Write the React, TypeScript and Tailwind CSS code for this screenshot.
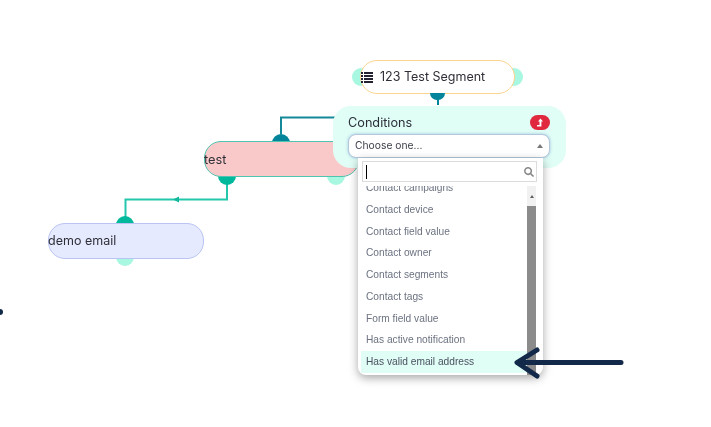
import { FaSearch } from 'react-icons/fa';

const OPTIONS = [
  'Contact device',
  'Contact field value',
  'Contact owner',
  'Contact segments',
  'Contact tags',
  'Form field value',
  'Has active notification',
];

function Dot({ className }: { className: string }) {
  return <div className={`absolute -z-10 h-[18px] w-[18px] rounded-full ${className}`} />;
}

function ConditionsPanel() {
  return (
    <div className="absolute left-[333px] top-[106px] h-[62px] w-[233px] rounded-[18px] bg-[#e0fdf6] px-[15px] pt-[9px]">
      <div className="flex h-[15px] items-center justify-between pr-px">
        <span className="text-[12.700px] text-[#2b2f3a]">Conditions</span>
        <span className="flex h-[15px] w-[20px] items-center justify-center rounded-full bg-[#e0283f]">
          <svg width="8" height="9" viewBox="0 0 8 9" fill="white">
            <path d="M4.500 0.500 7 3.500H5.400V8.500H1V7H3.500V3.500H2Z" />
          </svg>
        </span>
      </div>

      {/* select + open dropdown */}
      <div className="relative mt-[4px] w-[202px]">
        <div className="flex h-[24px] items-center justify-between rounded-[8px] border border-[#b4c8dc] bg-white px-[6px] text-[10.300px] text-[#3c3f4a] shadow-[0_0_3px_rgba(70,120,190,0.45)]">
          <span>Choose one...</span>
          <span className="h-0 w-0 border-x-[3px] border-b-[4px] border-x-transparent border-b-[#777]" />
        </div>

        <div className="absolute left-[10px] top-[24px] h-[217px] w-[185px] overflow-hidden rounded-b-[8px] bg-white font-['Liberation_Sans',sans-serif] shadow-[0_3px_10px_rgba(0,0,0,0.35)]">
          <div className="ml-[4px] mr-[6px] mt-[3px] flex h-[21px] items-center justify-between border border-[#dcdcdc] pl-[3px] pr-[2px]">
            <span className="h-[14px] w-px bg-black" />
            <FaSearch className="text-[10px] text-[#8a8a8a]" />
          </div>
          <div className="mt-[4px] flex h-[189px] pl-[3px] pr-[7px]">
            <div className="min-w-0 flex-1 overflow-hidden text-[10.200px] leading-[21.750px] text-[#6b7280]">
              <div className="-mt-[9px] pl-[5px]">Contact campaigns</div>
              {OPTIONS.map((option) => (
                <div key={option} className="pl-[5px]">
                  {option}
                </div>
              ))}
              <div className="bg-[#e0fdf6] pl-[5px] text-[#4a5160]">Has valid email address</div>
            </div>
            <div className="flex w-[9px] flex-col bg-[#f1f1f1]">
              <div className="flex h-[20px] items-center justify-center">
                <span className="h-0 w-0 border-x-[2.500px] border-b-[3px] border-x-transparent border-b-[#606060]" />
              </div>
              <div className="flex-1 bg-[#8b8b8b]" />
            </div>
          </div>
        </div>
      </div>
    </div>
  );
}

export default function App() {
  return (
    <div className="relative isolate h-[427px] w-[711px] overflow-hidden bg-white font-['Inter',sans-serif] text-[#2f2f38] blur-[0.35px]">
      {/* connectors */}
      <svg className="absolute inset-0 -z-10" width="711" height="427" fill="none">
        <path d="M281 134V117.500H340" stroke="#15899a" strokeWidth="2" />
        <path d="M227 180V199.500H125.500V218" stroke="#22c7ac" strokeWidth="2" />
        <path d="M173 199.500L179 196.500V202.500Z" fill="#12b89c" />
      </svg>

      {/* segment node */}
      <div className="absolute left-[360px] top-[60px] flex h-[34px] w-[155px] items-center gap-[7px] rounded-[17px] border-[1.500px] border-[#fbd48f] bg-white text-[12.500px]">
        <Dot className="-left-[9px] top-[7px] bg-[#a8f7e0]" />
        <Dot className="-right-[9px] top-[7px] bg-[#a8f7e0]" />
        <svg width="12" height="11" viewBox="0 0 12 11" fill="#222230" className="shrink-0">
          <path d="M0 0h2v2H0zM3 0h9v2H3zM0 3h2v2H0zM3 3h9v2H3zM0 6h2v2H0zM3 6h9v2H3zM0 9h2v2H0zM3 9h9v2H3z" />
        </svg>
        <span>123 Test Segment</span>
        <div className="absolute left-[69px] top-[32px] h-[7px] w-[15px] rounded-b-full bg-[#02859a]" />
        <div className="absolute left-[76px] top-[38px] h-[6px] w-[1.500px] bg-[#02859a]" />
      </div>

      {/* test node */}
      <div className="absolute left-[204px] top-[141px] flex h-[36px] w-[155px] items-center rounded-[17px] border-[1.500px] border-[#4fc4b0] bg-[#f9c9c9] pt-px text-[12.800px]">
        <Dot className="left-[67px] -top-[8px] bg-[#02859a]" />
        <Dot className="left-[13px] top-[25px] bg-[#00b89c]" />
        <Dot className="left-[122px] top-[25px] bg-[#a8f7e0]" />
        <span className="-ml-px">test</span>
      </div>

      {/* demo email node */}
      <div className="absolute left-[48px] top-[223px] flex h-[36px] w-[156px] items-center rounded-[17px] border-[1.500px] border-[#bac4f3] bg-[#e6eafe] text-[12.500px]">
        <Dot className="left-[67px] -top-[8px] bg-[#00b89c]" />
        <Dot className="left-[67px] top-[24px] bg-[#a8f7e0]" />
        <span className="-ml-px">demo email</span>
      </div>

      <div className="absolute -left-[3px] top-[309px] h-[6px] w-[6px] rounded-full bg-[#12294a]" />

      <ConditionsPanel />

      {/* annotation arrow */}
      <svg className="absolute inset-0" width="711" height="427" fill="none">
        <path
          d="M621 362.500H518M537 350 517 362.500 537 376"
          stroke="#12294a"
          strokeWidth="5"
          strokeLinecap="round"
          strokeLinejoin="round"
        />
      </svg>
    </div>
  );
}
